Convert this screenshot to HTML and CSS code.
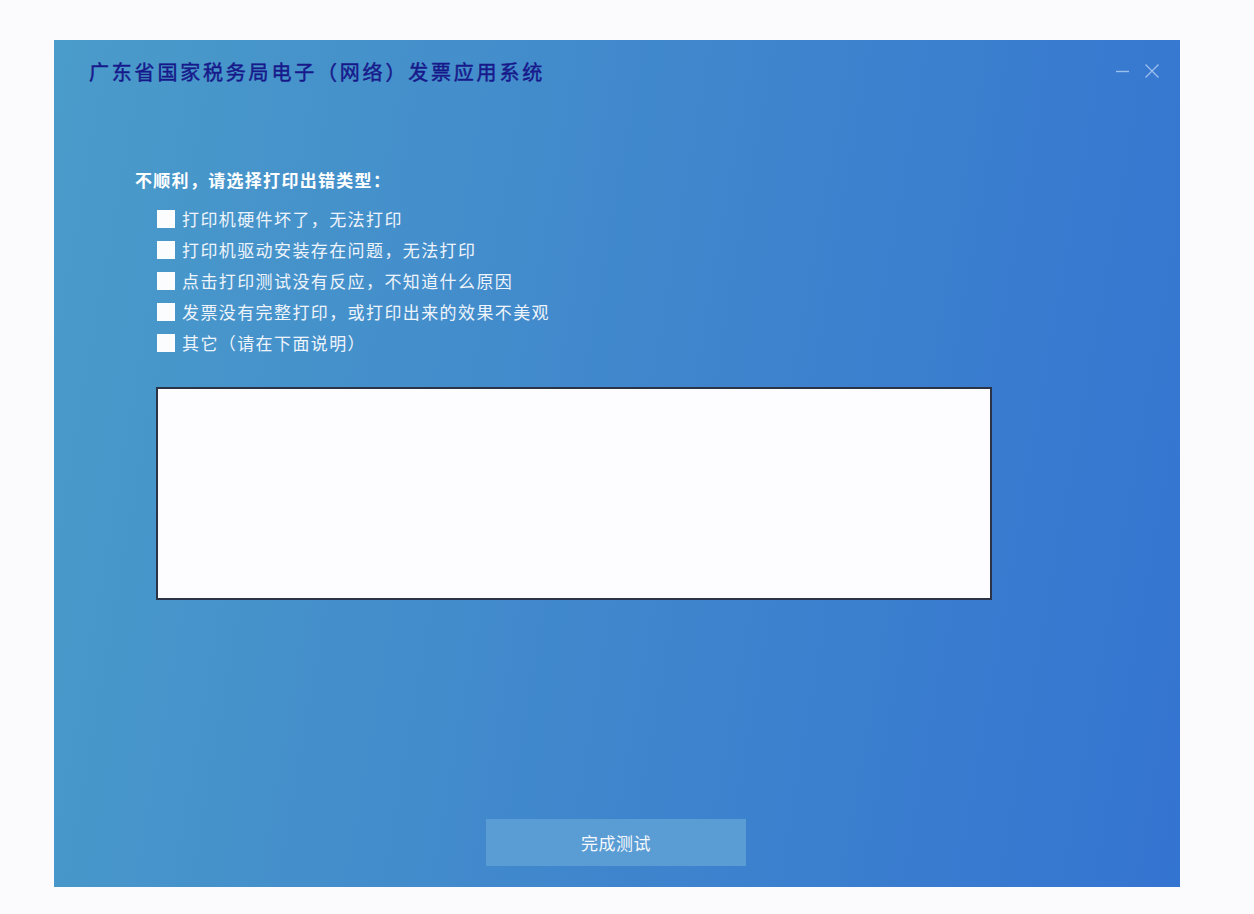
FILE: index.html
```html
<!DOCTYPE html>
<html lang="zh-CN">
<head>
<meta charset="utf-8">
<title>广东省国家税务局电子（网络）发票应用系统</title>
<link rel="stylesheet" href="styles.css">
</head>
<body>
<div class="window">
  <div class="titlebar">
    <div class="title">广东省国家税务局电子（网络）发票应用系统</div>
    <div class="controls">
      <svg class="ctl" width="16" height="16" viewBox="0 0 16 16"><path d="M1 8.5H14" stroke="#9cc0ee" stroke-width="1.4"/></svg>
      <svg class="ctl" width="16" height="16" viewBox="0 0 16 16"><path d="M1.5 1.5L14.5 14.5M14.5 1.5L1.5 14.5" stroke="#9cc0ee" stroke-width="1.3"/></svg>
    </div>
  </div>
  <div class="content">
    <div class="heading">不顺利，请选择打印出错类型：</div>
    <ul class="options">
      <li class="opt"><span class="box"></span><span>打印机硬件坏了，无法打印</span></li>
      <li class="opt"><span class="box"></span><span>打印机驱动安装存在问题，无法打印</span></li>
      <li class="opt"><span class="box"></span><span>点击打印测试没有反应，不知道什么原因</span></li>
      <li class="opt"><span class="box"></span><span>发票没有完整打印，或打印出来的效果不美观</span></li>
      <li class="opt"><span class="box"></span><span>其它（请在下面说明）</span></li>
    </ul>
    <textarea class="note"></textarea>
  </div>
  <div class="footer">
    <button class="finish">完成测试</button>
  </div>
</div>
</body>
</html>
```

FILE: styles.css
```css
html, body {
  margin: 0;
  padding: 0;
  background: #fbfbfd;
}
body {
  padding: 40px 0 0 54px;
  font-family: "Noto Sans CJK SC", "Noto Sans", sans-serif;
}
.window {
  width: 1126px;
  height: 847px;
  background: linear-gradient(100deg, #4a9cca 0%, #4189cc 45%, #3474d1 100%);
  display: flex;
  flex-direction: column;
  box-sizing: border-box;
}
.titlebar {
  display: flex;
  justify-content: space-between;
  align-items: flex-start;
  padding: 20px 20px 0 35px;
  height: 64px;
  box-sizing: border-box;
}
.title {
  color: #17198a;
  font-size: 20px;
  line-height: 24px;
  letter-spacing: 2.8px;
  -webkit-text-stroke: 0.45px #17198a;
}
.controls {
  display: flex;
  gap: 13px;
  padding-top: 3px;
}
.ctl { display: block; }
.content {
  flex: 1;
  padding: 107px 0 0 81px;
}
.heading {
  color: #ffffff;
  font-size: 17px;
  font-weight: bold;
  line-height: 20px;
  letter-spacing: 1.3px;
  margin-top: -41px;
}
.options {
  list-style: none;
  margin: 13px 0 0 22px;
  padding: 0;
}
.opt {
  display: flex;
  align-items: center;
  gap: 7px;
  height: 31px;
  color: #eef4fb;
  font-size: 17px;
  letter-spacing: 1.4px;
}
.box {
  width: 18px;
  height: 18px;
  background: #fbfcfe;
  flex: none;
}
.note {
  display: block;
  margin: 29px 0 0 21px;
  width: 836px;
  height: 213px;
  box-sizing: border-box;
  border: 2px solid #2b3446;
  background: #fdfcfe;
  resize: none;
  outline: none;
}
.footer {
  display: flex;
  justify-content: center;
  padding: 0 0 21px 0;
}
.finish {
  width: 260px;
  height: 47px;
  border: none;
  background: #5a9cd4;
  color: #f4f8fc;
  font-family: "Noto Sans CJK SC", sans-serif;
  font-size: 17px;
  letter-spacing: 0.5px;
  margin-left: -2px;
}
```
